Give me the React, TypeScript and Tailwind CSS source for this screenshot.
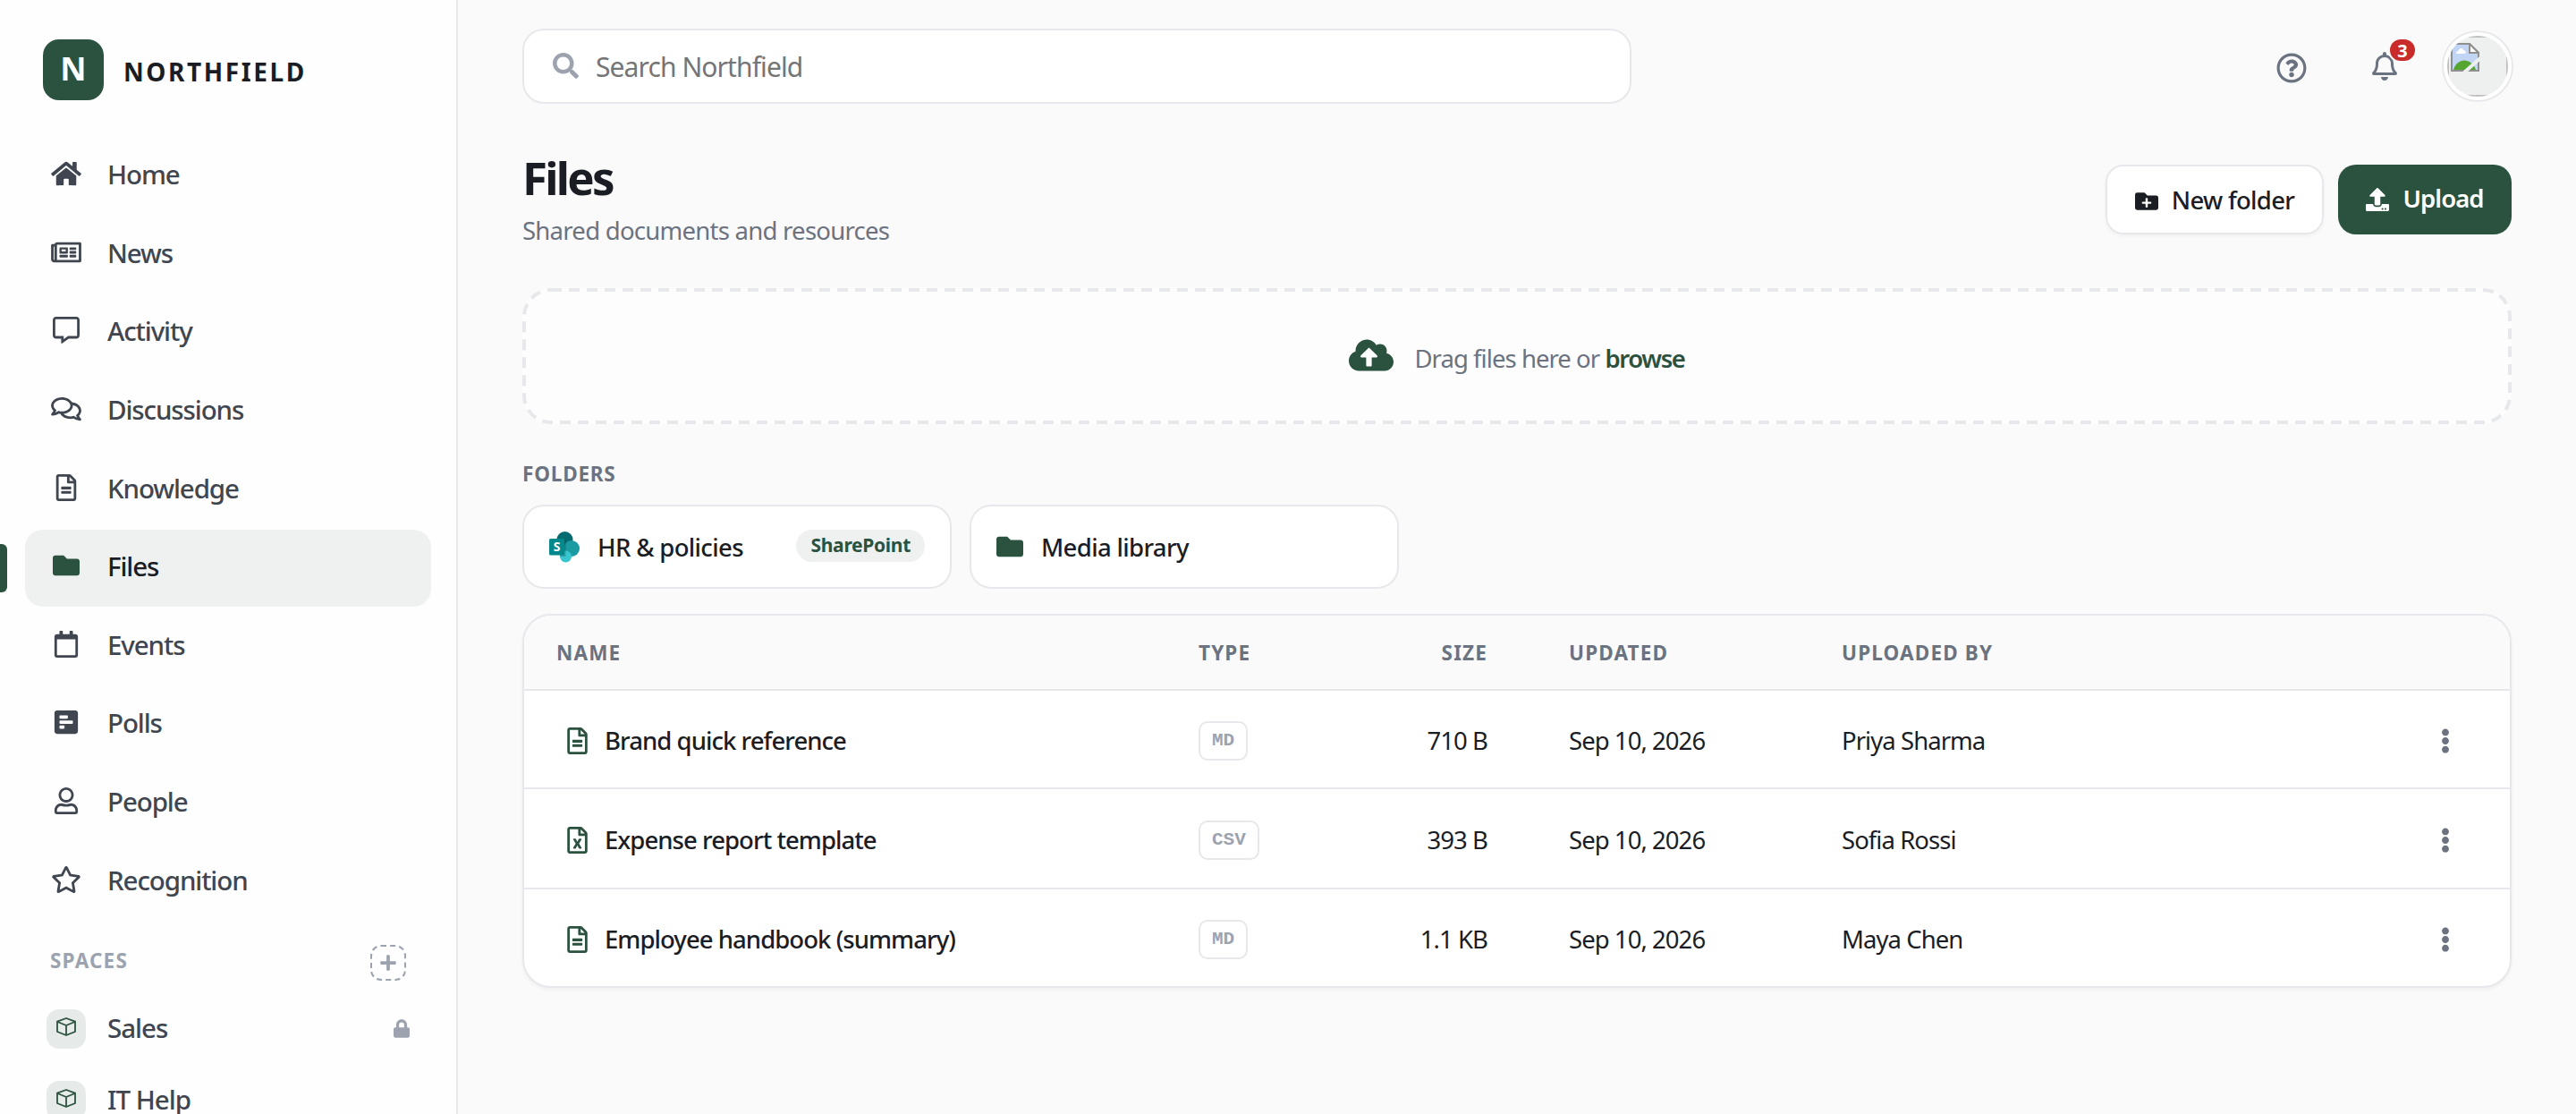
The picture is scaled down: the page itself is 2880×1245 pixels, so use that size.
import type { ReactNode } from "react";
import type { IconType } from "react-icons";
import {
  FaCloudUploadAlt,
  FaEllipsisV,
  FaFolder,
  FaFolderPlus,
  FaHome,
  FaLock,
  FaPlus,
  FaPollH,
  FaRegBell,
  FaRegCalendar,
  FaRegCommentAlt,
  FaRegComments,
  FaRegFileAlt,
  FaRegFileExcel,
  FaRegNewspaper,
  FaRegQuestionCircle,
  FaRegStar,
  FaRegUser,
  FaSearch,
  FaUpload,
} from "react-icons/fa";

interface NavItem {
  label: string;
  icon: IconType;
  active?: boolean;
}

interface FileRow {
  name: string;
  type: string;
  size: string;
  updated: string;
  uploadedBy: string;
  icon: IconType;
}

const navItems: NavItem[] = [
  { label: "Home", icon: FaHome },
  { label: "News", icon: FaRegNewspaper },
  { label: "Activity", icon: FaRegCommentAlt },
  { label: "Discussions", icon: FaRegComments },
  { label: "Knowledge", icon: FaRegFileAlt },
  { label: "Files", icon: FaFolder, active: true },
  { label: "Events", icon: FaRegCalendar },
  { label: "Polls", icon: FaPollH },
  { label: "People", icon: FaRegUser },
  { label: "Recognition", icon: FaRegStar },
];

const spaces = [
  { label: "Sales", locked: true },
  { label: "IT Help", locked: false },
];

const files: FileRow[] = [
  {
    name: "Brand quick reference",
    type: "MD",
    size: "710 B",
    updated: "Sep 10, 2026",
    uploadedBy: "Priya Sharma",
    icon: FaRegFileAlt,
  },
  {
    name: "Expense report template",
    type: "CSV",
    size: "393 B",
    updated: "Sep 10, 2026",
    uploadedBy: "Sofia Rossi",
    icon: FaRegFileExcel,
  },
  {
    name: "Employee handbook (summary)",
    type: "MD",
    size: "1.1 KB",
    updated: "Sep 10, 2026",
    uploadedBy: "Maya Chen",
    icon: FaRegFileAlt,
  },
];

function CubeIcon() {
  return (
    <svg
      viewBox="0 0 22 21"
      className="mb-[4px] h-[21px] w-[22px]"
      fill="none"
      stroke="#2b513f"
      strokeWidth="1.8"
      strokeLinejoin="round"
    >
      <path d="M11 1 21 4.6V16L11 20 1 16V4.6Z" />
      <path d="M1.4 5 11 9l9.6-4M11 9v11" />
    </svg>
  );
}

function SharePointIcon() {
  return (
    <svg viewBox="0 0 34 36" className="h-9 w-[34px] shrink-0">
      <circle cx="17.5" cy="10" r="9" fill="#036c70" />
      <circle cx="25" cy="20" r="9" fill="#1a9ba1" />
      <circle cx="18.5" cy="29" r="6.5" fill="#37c6d0" />
      <path d="M8 10h10.5v19H12z" fill="#000" opacity=".2" />
      <rect x="0" y="9" width="17" height="18.5" rx="1.5" fill="#03888c" />
      <text
        x="8.6"
        y="23"
        textAnchor="middle"
        fill="#fff"
        fontFamily="Noto Sans, sans-serif"
        fontWeight="700"
        fontSize="14"
      >
        S
      </text>
    </svg>
  );
}

function BrokenImageIcon() {
  return (
    <svg viewBox="0 0 32 32" className="absolute left-1 top-2 size-8">
      <path d="M1 1h20l10 10v20H1z" fill="#c3d5f5" stroke="#8f8f8f" strokeWidth="2" />
      <path d="M6 12c0-3 3-3 3-4 1-3 5-2 5 0 3 0 4 4 1 4z" fill="#fff" />
      <path d="M3 30c4-14 20-14 25 0z" fill="#55a630" />
      <path d="M21 1v10h10z" fill="#fff" stroke="#8f8f8f" strokeWidth="2" />
      <path d="M33 17 15 33" stroke="#eef0ef" strokeWidth="4" />
    </svg>
  );
}

function Sidebar() {
  return (
    <aside className="flex w-[512px] shrink-0 flex-col border-r-2 border-[#e7e8ec] bg-[#fefefe] pt-11">
      <div className="flex h-[68px] items-center pl-12">
        <div className="flex size-[68px] items-center justify-center rounded-[18px] bg-[#2b513f] pb-[2px] text-[36px] font-bold text-white">
          N
        </div>
        <span className="ml-[22px] pt-[3px] text-[28px] font-bold tracking-[2.6px]">NORTHFIELD</span>
      </div>

      <nav className="mt-[42px] flex flex-col gap-[2px] px-7">
        {navItems.map(({ label, icon: Icon, active }) => (
          <a
            key={label}
            className={
              active
                ? "relative flex h-[85.6px] items-center rounded-[20px] bg-[#eef1f0] pb-[5px] pl-7 text-[#1a1d23]"
                : "relative flex h-[85.6px] items-center rounded-[20px] pb-[5px] pl-7 text-[#3f4650]"
            }
          >
            {active && <span className="absolute -left-7 top-4 h-[54px] w-2 rounded-r-[6px] bg-[#2b513f]" />}
            <span className="flex w-9 justify-center">
              <Icon className={active ? "h-[30px] w-[34px] text-[#2b513f]" : "h-[30px] w-[34px]"} />
            </span>
            <span className="ml-7 pt-[2px] text-[29.5px] font-medium tracking-[-1.1px]">{label}</span>
          </a>
        ))}
      </nav>

      <div className="mt-7 flex items-center justify-between px-14">
        <span className="pb-[4px] text-[22.5px] font-bold tracking-[1.2px] text-[#9ca3af]">SPACES</span>
        <button className="flex size-10 items-center justify-center rounded-[12px] border-2 border-dashed border-[#9ca3af] text-[#9ca3af]">
          <FaPlus className="size-5" />
        </button>
      </div>

      <div className="mt-[14px] flex flex-col">
        {spaces.map((space) => (
          <a key={space.label} className="flex h-20 shrink-0 items-center px-[52px] text-[#3f4650]">
            <span className="flex size-11 items-center justify-center rounded-[14px] bg-[#e6ebe9]">
              <CubeIcon />
            </span>
            <span className="ml-6 pb-px text-[29.5px] font-medium tracking-[-1px]">{space.label}</span>
            {space.locked && <FaLock className="ml-auto h-[21px] w-[18px] text-[#9ca3af]" />}
          </a>
        ))}
      </div>
    </aside>
  );
}

function Topbar() {
  return (
    <header className="flex h-[84px] items-center">
      <label className="flex h-[84px] w-[1240px] items-center rounded-3xl border-2 border-[#e7e8ec] bg-white pl-8">
        <FaSearch className="mb-[2px] size-[29px] text-[#9ca3af]" />
        <span className="ml-[19px] pt-px text-[30px] tracking-[-0.9px] text-[#757575]">Search Northfield</span>
      </label>
      <div className="ml-auto flex items-center">
        <FaRegQuestionCircle className="mt-[3px] size-[34px] text-[#6b7280]" />
        <div className="relative ml-[73px]">
          <FaRegBell className="h-8 w-7 text-[#6b7280]" />
          <span className="absolute -top-4 left-[18px] flex h-7 w-8 items-center justify-center rounded-full border-2 border-[#fafafa] bg-[#c92a2a] pt-px text-[20px] font-bold text-white">
            3
          </span>
        </div>
        <div className="ml-[52px] rounded-full border-4 border-white ring-2 ring-[#e7e8ec]">
          <div className="relative size-[68px] overflow-hidden rounded-full bg-[#eef0ef]">
            <span className="absolute inset-0 border-2 border-[#c0c0c0]" />
            <BrokenImageIcon />
          </div>
        </div>
      </div>
    </header>
  );
}

function PageHeader() {
  return (
    <div className="mt-12 flex items-start">
      <div>
        <h1 className="text-[51px] font-bold leading-[68px] tracking-[-2.7px]">Files</h1>
        <p className="mt-1 pt-px text-[27.5px] leading-[41px] tracking-[-0.74px] text-[#6b7280]">
          Shared documents and resources
        </p>
      </div>
      <div className="ml-auto flex gap-4 pt-5">
        <button className="flex h-[78px] w-[244px] items-center justify-center rounded-[20px] border-2 border-[#e7e8ec] bg-white text-[27.5px] font-medium tracking-[-0.7px] shadow-[0_2px_4px_rgba(0,0,0,0.04)]">
          <FaFolderPlus className="mr-[15px] mt-[3px] size-[26px]" />
          <span className="pt-px">New folder</span>
        </button>
        <button className="flex h-[78px] w-[194px] items-center justify-center rounded-[20px] bg-[#2b513f] text-[27.5px] font-semibold tracking-[-0.95px] text-white">
          <FaUpload className="mr-[15px] size-[26px]" />
          <span className="pb-[2px]">Upload</span>
        </button>
      </div>
    </div>
  );
}

function DropZone() {
  return (
    <div className="relative mt-11 flex h-[152px] items-center justify-center rounded-[32px] bg-white/60">
      <svg className="absolute inset-0 size-full" fill="none">
        <rect x="2" y="2" width="2220" height="148" rx="30" stroke="#e7e8ec" strokeWidth="4" strokeDasharray="12 8" />
      </svg>
      <FaCloudUploadAlt className="mb-[2px] h-10 w-[50px] text-[#2b513f]" />
      <p className="ml-[23px] pt-[5px] text-[27.5px] tracking-[-0.95px] text-[#6b7280]">
        Drag files here or <span className="font-semibold tracking-[-1.4px] text-[#2b513f]">browse</span>
      </p>
    </div>
  );
}

function FolderCard({ name, icon, badge }: { name: string; icon: ReactNode; badge?: string }) {
  return (
    <div className="flex h-[94px] w-[480px] items-center rounded-3xl border-2 border-[#e7e8ec] bg-white px-7">
      {icon}
      <span className="ml-5 pt-px text-[27.5px] font-medium tracking-[-0.65px]">{name}</span>
      {badge && (
        <span className="mb-[2px] ml-auto flex h-9 items-center rounded-full bg-[#eef1f0] px-4 text-[21px] font-bold tracking-[-0.3px] text-[#2b513f]">
          {badge}
        </span>
      )}
    </div>
  );
}

function FilesTable() {
  return (
    <div className="mt-7 overflow-hidden rounded-[32px] border-2 border-[#e7e8ec] bg-white shadow-[0_2px_4px_rgba(0,0,0,0.05)]">
      <div className="grid h-[82px] grid-cols-[718px_120px_203px_396px_1fr_145px] items-center bg-[#fafafa] pl-9 pt-[2px] text-[22.5px] font-bold tracking-[1.15px] text-[#6b7280]">
        <span>NAME</span>
        <span>TYPE</span>
        <span className="text-right">SIZE</span>
        <span className="pl-[91px]">UPDATED</span>
        <span>UPLOADED BY</span>
      </div>
      <div>
        {files.map((file) => (
          <div
            key={file.name}
            className="grid h-[110px] grid-cols-[718px_120px_203px_396px_1fr_145px] items-center border-t-2 border-[#e7e8ec] pl-9 pt-[3px] text-[27.5px] tracking-[-0.95px] even:h-[112px]"
          >
            <span className="flex items-center font-medium">
              <file.icon className="ml-3 mr-[19px] h-[30px] w-[23px] text-[#2b513f]" />
              {file.name}
            </span>
            <span>
              <span className="inline-flex h-11 items-center rounded-[10px] border-2 border-[#e7e8ec] px-[13px] pb-[2px] align-middle font-['Liberation_Mono',monospace] text-[21px] font-bold tracking-normal text-[#9ca3af]">
                {file.type}
              </span>
            </span>
            <span className="text-right">{file.size}</span>
            <span className="pl-[91px]">{file.updated}</span>
            <span>{file.uploadedBy}</span>
            <FaEllipsisV className="size-7 justify-self-center text-[#6b7280]" />
          </div>
        ))}
      </div>
    </div>
  );
}

export default function App() {
  return (
    <div className="flex h-[1245px] w-[2880px] overflow-hidden bg-[#fafafa] font-['Noto_Sans','Open_Sans',sans-serif] text-[#1a1d23]">
      <Sidebar />
      <main className="flex flex-1 flex-col px-[72px] pt-8">
        <Topbar />
        <PageHeader />
        <DropZone />
        <h2 className="mt-10 text-[22.5px] font-bold leading-8 tracking-[0.8px] text-[#6b7280]">FOLDERS</h2>
        <div className="mt-[18px] flex gap-5">
          <FolderCard name="HR & policies" icon={<SharePointIcon />} badge="SharePoint" />
          <FolderCard name="Media library" icon={<FaFolder className="size-[30px] text-[#2b513f]" />} />
        </div>
        <FilesTable />
      </main>
    </div>
  );
}
